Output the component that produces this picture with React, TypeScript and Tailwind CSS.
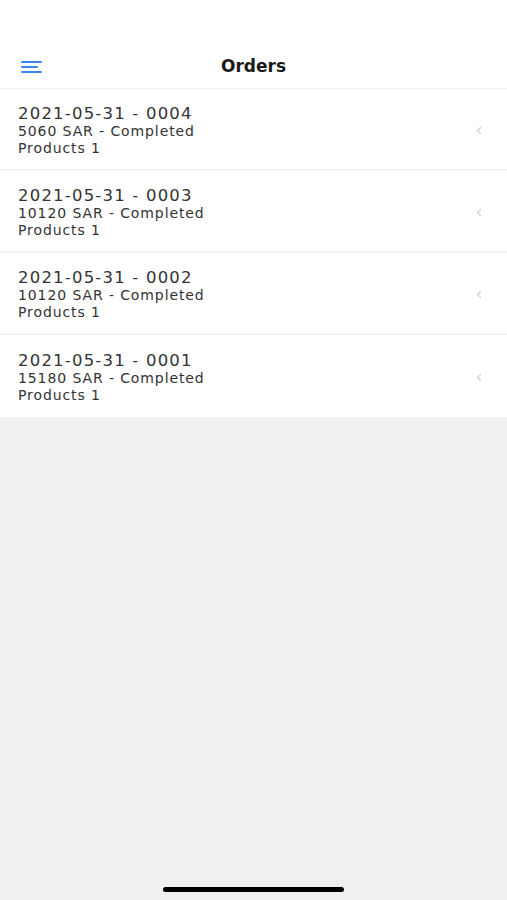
import React from "react";

const orders = [
  { id: "2021-05-31 - 0004", line: "5060 SAR - Completed" },
  { id: "2021-05-31 - 0003", line: "10120 SAR - Completed" },
  { id: "2021-05-31 - 0002", line: "10120 SAR - Completed" },
  { id: "2021-05-31 - 0001", line: "15180 SAR - Completed" },
];

export default function App() {
  return (
    <div
      className="w-[507px] h-[900px] bg-[#f0f0f0] flex flex-col relative overflow-hidden"
      style={{ fontFamily: '"DejaVu Sans", Verdana, sans-serif' }}
    >
      <div className="h-[89px] bg-white flex items-end pb-[11px] relative border-b border-[#f2f2f2]">
        <div className="pl-[21px] w-[80px] flex flex-col gap-[3px] pb-[4px]">
          <div className="w-[21px] h-[2px] bg-[#3a86f0] rounded-full" />
          <div className="w-[17px] h-[2px] bg-[#3a86f0] rounded-full" />
          <div className="w-[21px] h-[2px] bg-[#3a86f0] rounded-full" />
        </div>
        <div className="flex-1 text-center pr-[80px] text-[17px] font-bold text-[#1a1a1a] leading-[22px]">
          Orders
        </div>
      </div>
      <div className="flex flex-col bg-white">
        {orders.map((o, i) => (
          <div
            key={o.id}
            className={`h-[82px] flex items-center pl-[18px] pr-[25px] ${
              i < orders.length - 1 ? "border-b-2 border-[#f3f3f3]" : ""
            }`}
          >
            <div className="flex-1 flex flex-col text-[#333333] pt-[2px]">
              <div className="text-[16.5px] leading-[19px] tracking-[1.2px]">{o.id}</div>
              <div className="text-[14px] leading-[17px] tracking-[0.9px]">{o.line}</div>
              <div className="text-[14px] leading-[17px] tracking-[0.9px]">Products 1</div>
            </div>
            <svg width="6" height="9" viewBox="0 0 6 9" className="mt-[2px]">
              <path d="M5 1 L1.5 4.5 L5 8" fill="none" stroke="#d2d2d2" strokeWidth="1.3" />
            </svg>
          </div>
        ))}
      </div>
      <div className="flex-1" />
      <div className="flex justify-center pb-[8px]">
        <div className="w-[181px] h-[5px] bg-black rounded-full" />
      </div>
    </div>
  );
}
